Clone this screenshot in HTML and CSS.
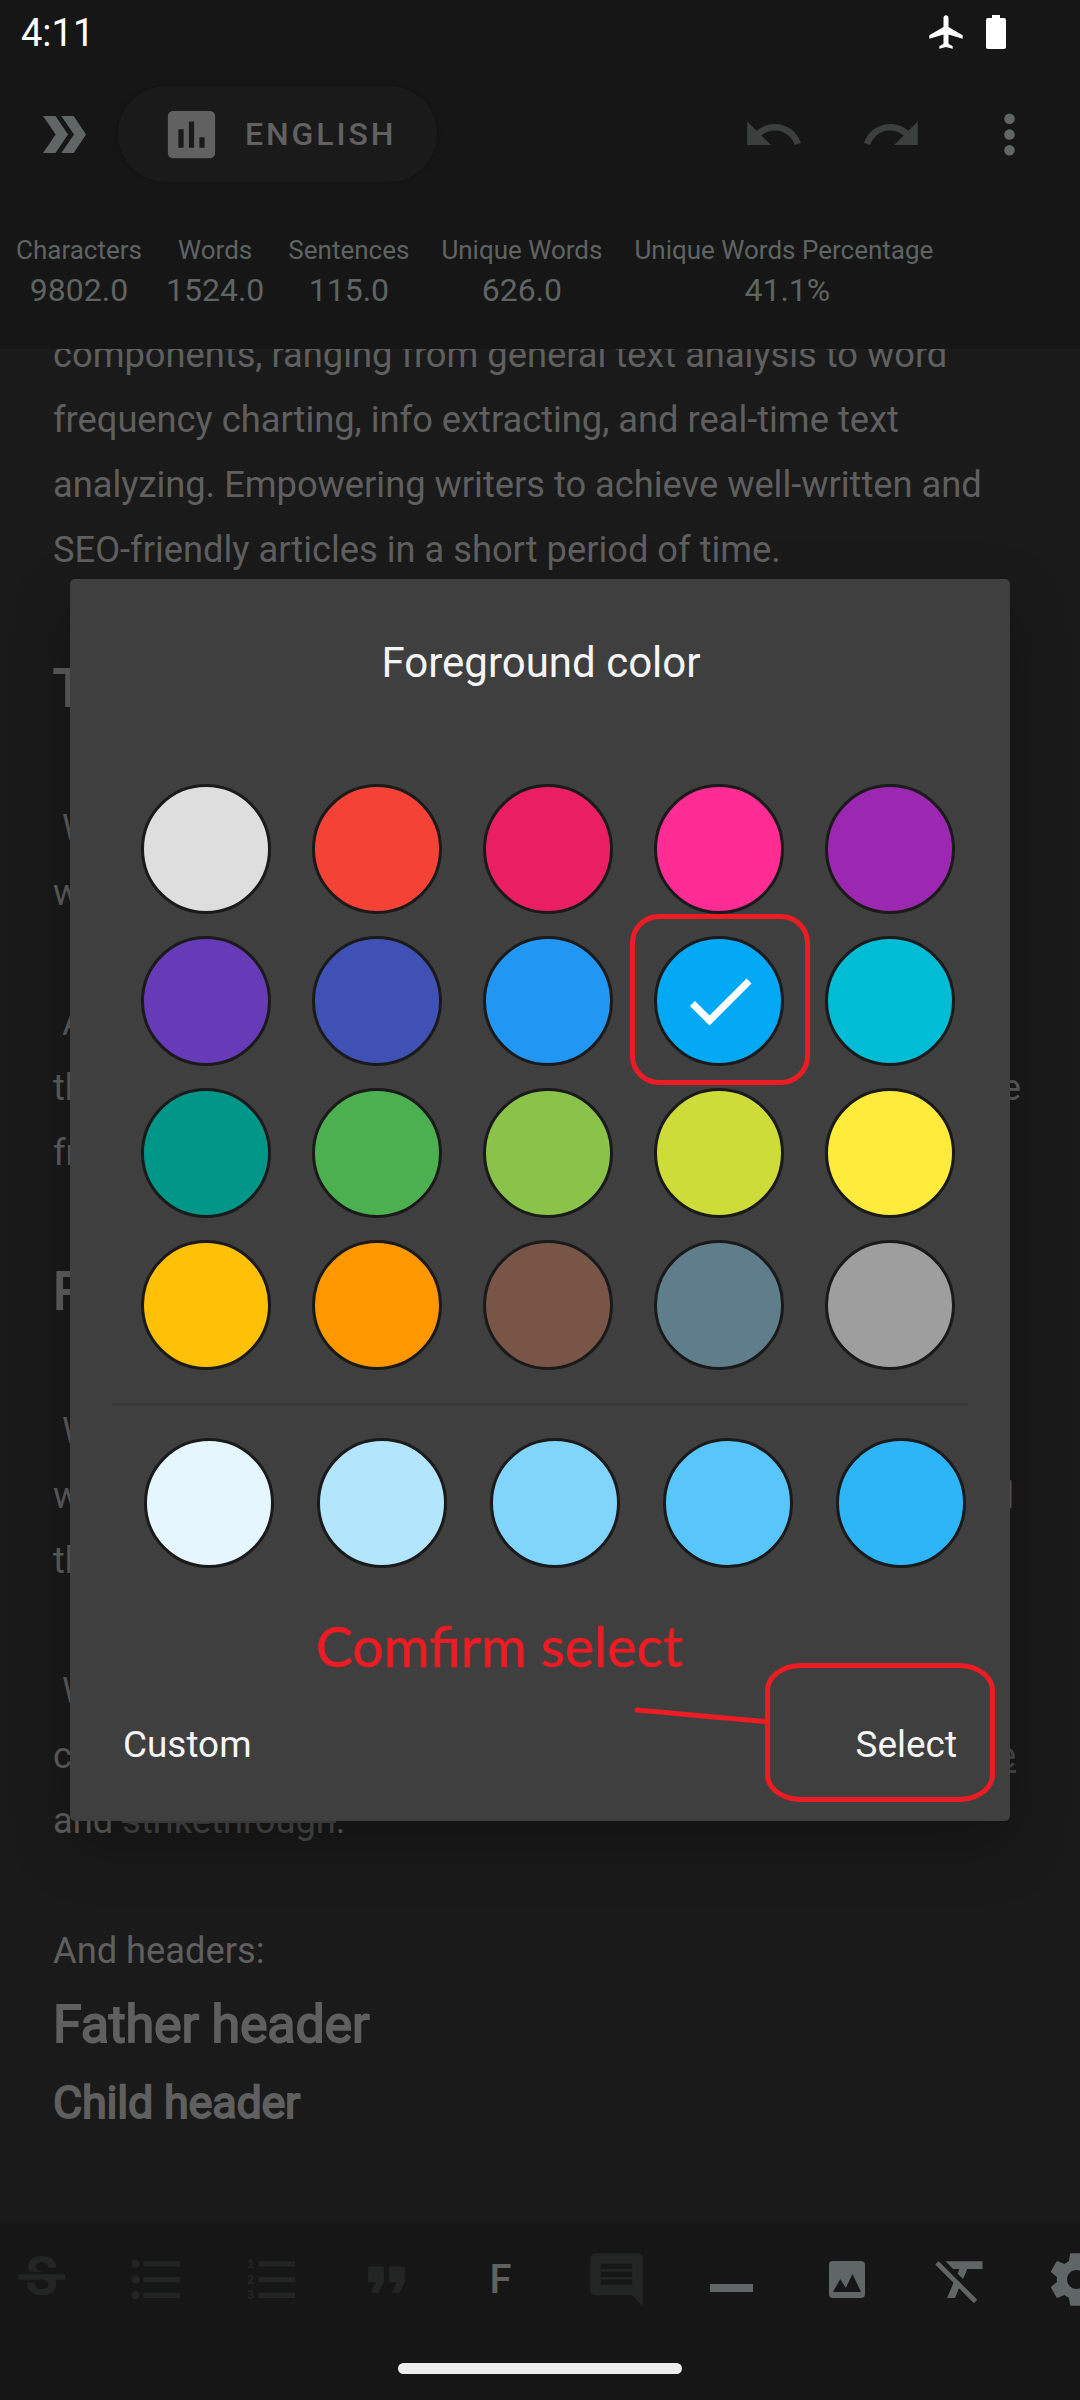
FILE: index.html
```html
<!DOCTYPE html>
<html lang="en">
<head>
<meta charset="utf-8">
<title>Foreground color</title>
<link rel="stylesheet" href="styles.css">
</head>
<body>
<div class="screen">
  <header class="status-bar">
    <span class="clock">4:11</span>
    <div class="status-icons">
      <svg class="plane" viewBox="0 0 24 24"><path d="M22 16v-2l-8.500-5V3.500c0-.83-.67-1.500-1.500-1.500s-1.500.67-1.500 1.500V9L2 14v2l8.500-2.500V19L8 20.500V22l4-1 4 1v-1.500L13.500 19v-5.500L22 16z"/></svg>
      <svg class="battery" viewBox="0 0 20 34"><path d="M6 0h8v3h4q2 0 2 2v27q0 2-2 2H2q-2 0-2-2V5q0-2 2-2h4z"/></svg>
    </div>
  </header>

  <div class="toolbar">
    <svg class="chevrons" viewBox="0 0 43 37"><path d="M0 0h12.500L25 18.500 12.500 37H0l12.700-18.500zM18.300 0h12.400L43 18.500 30.700 37H18.300L31 18.500z"/></svg>
    <div class="language">
      <svg class="icon" viewBox="0 0 24 24"><path d="M19 3H5c-1.100 0-2 .9-2 2v14c0 1.100.9 2 2 2h14c1.100 0 2-.9 2-2V5c0-1.100-.9-2-2-2zM9 17H7v-7h2v7zm4 0h-2V7h2v10zm4 0h-2v-4h2v4z"/></svg>
      <span>ENGLISH</span>
    </div>
    <div class="actions">
      <svg class="icon dim" viewBox="0 0 24 24"><path d="M12.500 8c-2.650 0-5.050.99-6.900 2.600L2 7v9h9l-3.620-3.620c1.390-1.160 3.160-1.880 5.120-1.880 3.540 0 6.550 2.310 7.600 5.500l2.370-.78C21.080 11.030 17.150 8 12.500 8z"/></svg>
      <svg class="icon dim" viewBox="0 0 24 24"><path d="M18.400 10.600C16.550 8.990 14.150 8 11.500 8c-4.650 0-8.580 3.030-9.960 7.220L3.900 16c1.050-3.190 4.050-5.500 7.600-5.500 1.950 0 3.730.72 5.120 1.880L13 16h9V7l-3.600 3.600z"/></svg>
      <svg class="icon" viewBox="0 0 24 24"><circle cx="12" cy="6" r="2"/><circle cx="12" cy="12" r="2"/><circle cx="12" cy="18" r="2"/></svg>
    </div>
  </div>

  <div class="stats">
    <div class="stat"><span class="label">Characters</span><span class="value">9802.0</span></div>
    <div class="stat"><span class="label">Words</span><span class="value">1524.0</span></div>
    <div class="stat"><span class="label">Sentences</span><span class="value">115.0</span></div>
    <div class="stat wide"><span class="label">Unique Words</span><span class="value">626.0</span></div>
    <div class="stat wide"><span class="label">Unique Words Percentage</span><span class="value percent">41.1%</span></div>
  </div>

  <main class="editor">
    <p>components, ranging from general text analysis to word<br>frequency charting, info extracting, and real-time text<br>analyzing. Empowering writers to achieve well-written and<br>SEO-friendly articles in a short period of time.</p>
    <h1 class="spaced">T</h1>
    <p class="spaced"> W<br>w</p>
    <div class="spaced">
      <p> A</p>
      <p class="split"><span>th</span><span class="end-a">e</span></p>
      <p>fr</p>
    </div>
    <h1 class="spaced">P</h1>
    <div class="spaced">
      <p> W</p>
      <p class="split"><span>w</span><span class="end-b">d</span></p>
      <p>th</p>
    </div>
    <div class="spaced">
      <p> W</p>
      <p class="split"><span>c</span><u class="end-c">e</u></p>
      <p>and <s>strikethrough</s>.</p>
    </div>
    <p class="spaced">And headers:</p>
    <h1>Father header</h1>
    <h2>Child header</h2>
  </main>

  <div class="format-bar">
    <div class="cell off"><svg class="icon" viewBox="0 0 24 24"><path d="M6.850 7.080C6.850 4.370 9.450 3 12.240 3c1.640 0 3 .49 3.900 1.280.77.65 1.460 1.730 1.460 3.240h-3.010c0-.31-.05-.59-.15-.85-.29-.86-1.200-1.280-2.250-1.280-1.860 0-2.340 1.020-2.340 1.700 0 .48.25.88.74 1.210.38.25.77.48 1.410.7H7.390c-.21-.34-.54-.89-.54-1.920zM21 12v-2H3v2h9.620c1.150.45 1.960.75 1.960 1.970 0 1-.81 1.670-2.280 1.670-1.540 0-2.930-.54-2.930-2.510H6.400c0 .55.08 1.130.24 1.580.81 2.290 3.290 3.300 5.670 3.300 2.270 0 5.300-.89 5.300-4.050 0-.3-.01-1.160-.48-1.940H21V12z"/></svg></div>
    <div class="cell off"><svg class="icon" viewBox="0 0 24 24"><circle cx="4" cy="6" r="1.500"/><circle cx="4" cy="12" r="1.500"/><circle cx="4" cy="18" r="1.500"/><path d="M7 5h14v2H7zM7 11h14v2H7zM7 17h14v2H7z"/></svg></div>
    <div class="cell off"><svg class="icon" viewBox="0 0 24 24"><path d="M7 5h14v2H7zM7 11h14v2H7zM7 17h14v2H7z"/><text class="numeral" x="2.700" y="7.600">1</text><text class="numeral" x="2.700" y="13.600">2</text><text class="numeral" x="2.700" y="19.600">3</text></svg></div>
    <div class="cell off"><svg class="icon" viewBox="0 0 24 24"><path d="M6 17h3l2-4V7H5v6h3zm8 0h3l2-4V7h-6v6h3z"/></svg></div>
    <div class="cell"><span class="letter">F</span></div>
    <div class="cell off"><svg class="icon" viewBox="0 0 24 24"><path d="M21.990 4c0-1.100-.89-2-1.990-2H4c-1.100 0-2 .9-2 2v12c0 1.100.9 2 2 2h14l4 4-.01-18zM18 14H6v-2h12v2zm0-3H6V9h12v2zm0-3H6V6h12v2z"/></svg></div>
    <div class="cell"><span class="rule"></span></div>
    <div class="cell"><svg class="picture" viewBox="0 0 36 37"><path fill-rule="evenodd" d="M4 0h28q4 0 4 4v29q0 4-4 4H4q-4 0-4-4V4q0-4 4-4zM4 31h28L23.500 13l-6.700 14-5.500-9z"/></svg></div>
    <div class="cell"><svg class="icon" viewBox="0 0 24 24"><path d="M3.270 5L2 6.270l6.970 6.970L6.500 19h3l1.570-3.660L16.730 21 18 19.730 3.270 5zM6 5v.18L8.820 8h2.400l-.72 1.680 2.100 2.100L14.210 8H20V5H6z"/></svg></div>
    <div class="cell"><svg class="icon" viewBox="0 0 24 24"><path d="M19.430 12.980c.04-.32.07-.64.07-.98s-.03-.66-.07-.98l2.110-1.650c.19-.15.24-.42.12-.64l-2-3.460c-.12-.22-.39-.3-.61-.22l-2.490 1c-.52-.4-1.080-.73-1.690-.98l-.38-2.650C14.460 2.180 14.250 2 14 2h-4c-.25 0-.46.18-.49.42l-.38 2.650c-.61.25-1.170.59-1.690.98l-2.490-1c-.23-.09-.49 0-.61.22l-2 3.460c-.13.22-.07.49.12.64l2.110 1.650c-.04.32-.07.65-.07.98s.03.66.07.98l-2.110 1.650c-.19.15-.24.42-.12.64l2 3.460c.12.22.39.3.61.22l2.490-1c.52.4 1.080.73 1.690.98l.38 2.650c.03.24.24.42.49.42h4c.25 0 .46-.18.49-.42l.38-2.650c.61-.25 1.170-.59 1.690-.98l2.490 1c.23.09.49 0 .61-.22l2-3.460c.12-.22.07-.49-.12-.64l-2.110-1.650zM12 15.600c-1.980 0-3.600-1.620-3.600-3.600s1.620-3.600 3.600-3.600 3.600 1.620 3.600 3.600-1.620 3.600-3.600 3.600z"/></svg></div>
  </div>
  <div class="nav"><span class="nav-handle"></span></div>

  <section class="dialog">
    <div class="title">Foreground color</div>
    <div class="palette">
      <i class="swatch" style="background:#dedede"></i>
      <i class="swatch" style="background:#f44336"></i>
      <i class="swatch" style="background:#e91e63"></i>
      <i class="swatch" style="background:#ff2c93"></i>
      <i class="swatch" style="background:#9c27b0"></i>
      <i class="swatch" style="background:#673ab7"></i>
      <i class="swatch" style="background:#3f51b5"></i>
      <i class="swatch" style="background:#2196f3"></i>
      <i class="swatch" style="background:#03a9f4"><svg class="check" viewBox="0 0 24 24"><path d="M9 16.170L4.830 12l-1.420 1.410L9 19 21 7l-1.410-1.410z"/></svg></i>
      <i class="swatch" style="background:#00bcd4"></i>
      <i class="swatch" style="background:#009688"></i>
      <i class="swatch" style="background:#4caf50"></i>
      <i class="swatch" style="background:#8bc34a"></i>
      <i class="swatch" style="background:#cddc39"></i>
      <i class="swatch" style="background:#ffeb3b"></i>
      <i class="swatch" style="background:#ffc107"></i>
      <i class="swatch" style="background:#ff9800"></i>
      <i class="swatch" style="background:#795548"></i>
      <i class="swatch" style="background:#607d8b"></i>
      <i class="swatch" style="background:#9e9e9e"></i>
    </div>
    <div class="divider"></div>
    <div class="shades">
      <i class="swatch" style="background:#e6f6ff"></i>
      <i class="swatch" style="background:#b3e5fc"></i>
      <i class="swatch" style="background:#81d4fa"></i>
      <i class="swatch" style="background:#58c6fa"></i>
      <i class="swatch" style="background:#2eb5f8"></i>
    </div>
    <div class="buttons"><span>Custom</span><span>Select</span></div>
  </section>

  <div class="mark mark-swatch"></div>
  <div class="mark mark-select"></div>
  <svg class="pointer" viewBox="0 0 136 20"><path d="M5 4L133 15.500"/></svg>
  <div class="note">Comfirm select</div>
</div>
</body>
</html>
```
FILE: styles.css
```css
body {
  margin: 0;
  background: #161616;
  font-family: Roboto, sans-serif;
}

.screen {
  position: relative;
  display: flex;
  flex-direction: column;
  width: 1080px;
  height: 2400px;
  overflow: hidden;
  background: #161616;
}

svg {
  display: block;
  fill: currentColor;
}

.icon {
  width: 63px;
  height: 63px;
  flex: none;
}

.status-bar {
  display: flex;
  justify-content: space-between;
  height: 63px;
  padding: 0 74px 0 21px;
  color: #fff;
}

.clock {
  font-size: 38px;
  line-height: 66px;
}

.status-icons {
  display: flex;
  align-items: center;
  gap: 20px;
}

.plane {
  width: 40px;
  height: 40px;
}

.battery {
  width: 20px;
  height: 34px;
}

.toolbar {
  display: flex;
  align-items: center;
  height: 142px;
  padding: 0 39px 0 43px;
  color: #606665;
}

.chevrons {
  width: 43px;
  height: 37px;
}

.language {
  display: flex;
  align-items: center;
  gap: 22px;
  box-sizing: border-box;
  width: 319px;
  height: 96px;
  margin-left: 32px;
  padding-left: 42px;
  border-radius: 48px;
  background: #1a1a1a;
  box-shadow: 0 0 4px #121212;
  color: #616161;
  font-size: 32px;
  font-weight: 500;
  letter-spacing: 2.9px;
}

.actions {
  display: flex;
  gap: 55px;
  margin-left: auto;
}

.dim {
  color: #3b3f3e;
}

.stats {
  display: flex;
  gap: 24px;
  box-sizing: border-box;
  height: 144px;
  padding: 30px 16px 0;
  color: #5e6463;
}

.stat {
  display: flex;
  flex-direction: column;
  align-items: center;
  gap: 5px;
  white-space: nowrap;
}

.wide {
  margin-left: 8px;
}

.label {
  font-size: 26px;
  line-height: 30px;
}

.value {
  font-size: 32px;
  line-height: 40px;
}

.percent {
  padding-left: 7px;
}

.editor {
  display: flow-root;
  flex: 1;
  padding: 0 53px;
  overflow: hidden;
  background: #1a1a1a;
  color: #5f5f5f;
  font-size: 36.3px;
  line-height: 65px;
  letter-spacing: -0.02px;
}

.editor > p:first-child {
  margin-top: -27px;
}

.editor p {
  margin: 0;
  white-space: pre;
}

.editor h1,
.editor h2 {
  margin: 0;
  font-weight: 400;
  -webkit-text-stroke: 1.8px currentColor;
}

.editor h1 {
  font-size: 52px;
  line-height: 83px;
  letter-spacing: -0.2px;
}

.editor h2 {
  font-size: 45px;
  line-height: 74px;
  letter-spacing: -0.25px;
}

.editor .spaced {
  margin-top: 65px;
}

.split {
  display: flex;
  justify-content: space-between;
}

.end-a {
  margin-right: 6px;
}

.end-b {
  margin-right: 13px;
}

.end-c {
  margin-right: 11px;
  color: #4a4a4a;
}

.editor s {
  color: #4a4a4a;
}

.format-bar {
  display: flex;
  height: 115px;
  margin-left: -16px;
  color: #606665;
}

.cell {
  display: flex;
  align-items: center;
  justify-content: center;
  flex: none;
  width: 115px;
}

.off {
  color: #232524;
}

.numeral {
  font: bold 4.6px "Liberation Mono", monospace;
  text-anchor: start;
}

.letter {
  margin-right: 2px;
  color: #606060;
  font-size: 40px;
  font-weight: 500;
}

.rule {
  width: 43px;
  height: 8px;
  margin-top: 17px;
  background: currentColor;
}

.picture {
  width: 36px;
  height: 37px;
}

.nav {
  display: flex;
  justify-content: center;
  height: 63px;
}

.nav-handle {
  width: 284px;
  height: 11px;
  margin-top: 26px;
  border-radius: 6px;
  background: #ededed;
}

.dialog {
  position: absolute;
  left: 70px;
  top: 579px;
  display: flex;
  flex-direction: column;
  width: 940px;
  height: 1242px;
  border-radius: 5px;
  background: #3f3f3f;
  box-shadow: 0 24px 60px rgba(0, 0, 0, 0.3);
  color: #f5f5f5;
}

.title {
  height: 205px;
  padding-left: 2px;
  font-size: 42px;
  line-height: 168px;
  text-align: center;
}

.palette {
  display: grid;
  grid-template-columns: repeat(5, 130px);
  gap: 22px 41px;
  padding-left: 71px;
}

.swatch {
  display: flex;
  align-items: center;
  justify-content: center;
  box-sizing: border-box;
  width: 130px;
  height: 130px;
  border: 3px solid #1a1a1a;
  border-radius: 50%;
}

.check {
  flex: none;
  width: 84px;
  height: 84px;
  margin-left: 2px;
  color: #fff;
}

.divider {
  height: 3px;
  margin: 33px 42px 32px;
  background: #383838;
}

.shades {
  display: flex;
  gap: 43px;
  padding-left: 74px;
}

.buttons {
  display: flex;
  justify-content: space-between;
  margin-top: 144px;
  padding: 0 53px;
  font-size: 36.9px;
  line-height: 65px;
}

.mark {
  position: absolute;
  box-sizing: border-box;
  border: 5px solid #ed1c24;
}

.mark-swatch {
  left: 630px;
  top: 914px;
  width: 180px;
  height: 171px;
  border-radius: 29px;
}

.mark-select {
  left: 765px;
  top: 1663px;
  width: 230px;
  height: 139px;
  border-radius: 36px / 27px;
}

.pointer {
  position: absolute;
  left: 632px;
  top: 1706px;
  width: 136px;
  height: 20px;
  fill: none;
  stroke: #ed1c24;
  stroke-width: 5;
  stroke-linecap: round;
}

.note {
  position: absolute;
  left: 316px;
  top: 1614px;
  color: #ed1c24;
  font-family: Lato, sans-serif;
  font-size: 55.5px;
  line-height: 64px;
  white-space: nowrap;
  -webkit-text-stroke: 0.6px currentColor;
}
```
